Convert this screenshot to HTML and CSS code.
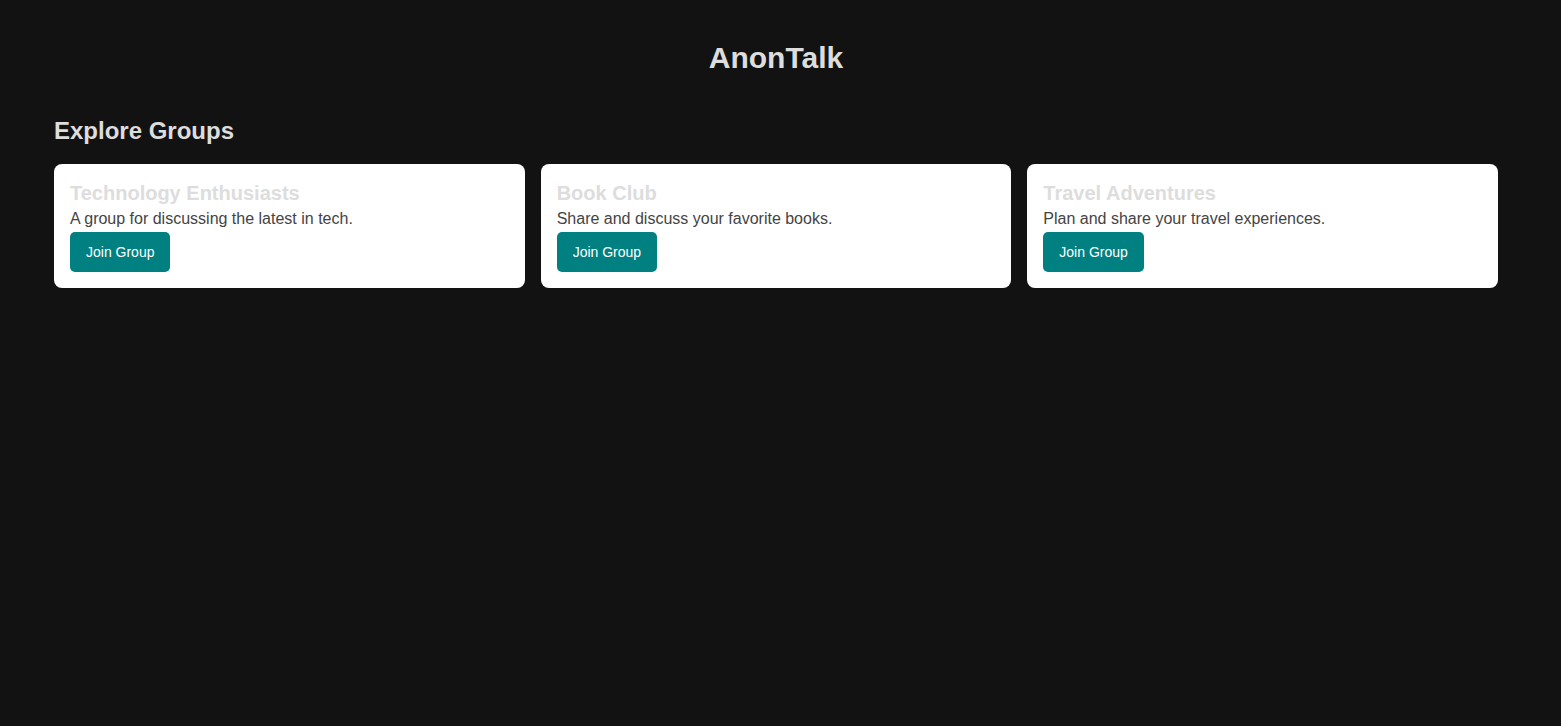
FILE: index.html
```html
<!DOCTYPE html>
<html lang="en">
<head>
<meta charset="utf-8">
<title>AnonTalk</title>
<link rel="stylesheet" href="styles.css">
</head>
<body>
<div class="page">
  <header class="header">
    <h1 class="brand">AnonTalk</h1>
  </header>
  <main class="groups">
    <h2 class="groups-title">Explore Groups</h2>
    <div class="group-grid">
      <div class="group-card">
        <h3 class="group-name">Technology Enthusiasts</h3>
        <p class="group-desc">A group for discussing the latest in tech.</p>
        <button class="join-btn">Join Group</button>
      </div>
      <div class="group-card">
        <h3 class="group-name">Book Club</h3>
        <p class="group-desc">Share and discuss your favorite books.</p>
        <button class="join-btn">Join Group</button>
      </div>
      <div class="group-card">
        <h3 class="group-name">Travel Adventures</h3>
        <p class="group-desc">Plan and share your travel experiences.</p>
        <button class="join-btn">Join Group</button>
      </div>
    </div>
  </main>
</div>
</body>
</html>
```
FILE: styles.css
```css
html, body {
  margin: 0;
  padding: 0;
  background: #121212;
  min-height: 100%;
}
body {
  font-family: "Liberation Sans", Arial, sans-serif;
  color: #dddddd;
}
.page {
  padding: 41px 63px 0 54px;
}
.header {
  display: flex;
  justify-content: center;
}
.brand {
  margin: 0;
  font-size: 30px;
  font-weight: bold;
  color: #dddddd;
}
.groups {
  margin-top: 42px;
}
.groups-title {
  margin: 0 0 19px;
  font-size: 24px;
  font-weight: bold;
  color: #dddddd;
}
.group-grid {
  display: grid;
  grid-template-columns: repeat(3, 1fr);
  gap: 16px;
}
.group-card {
  background: #ffffff;
  border-radius: 8px;
  padding: 18px 16px 16px;
  display: flex;
  flex-direction: column;
  align-items: flex-start;
}
.group-name {
  margin: 0 0 5px;
  font-size: 20px;
  font-weight: bold;
  color: #dddddd;
}
.group-desc {
  margin: 0 0 4px;
  font-size: 16px;
  color: #444444;
}
.join-btn {
  background: #008080;
  color: #ffffff;
  border: none;
  border-radius: 5px;
  padding: 12px 16px;
  font-family: "Liberation Sans", Arial, sans-serif;
  font-size: 14px;
  line-height: normal;
  cursor: pointer;
}
```
